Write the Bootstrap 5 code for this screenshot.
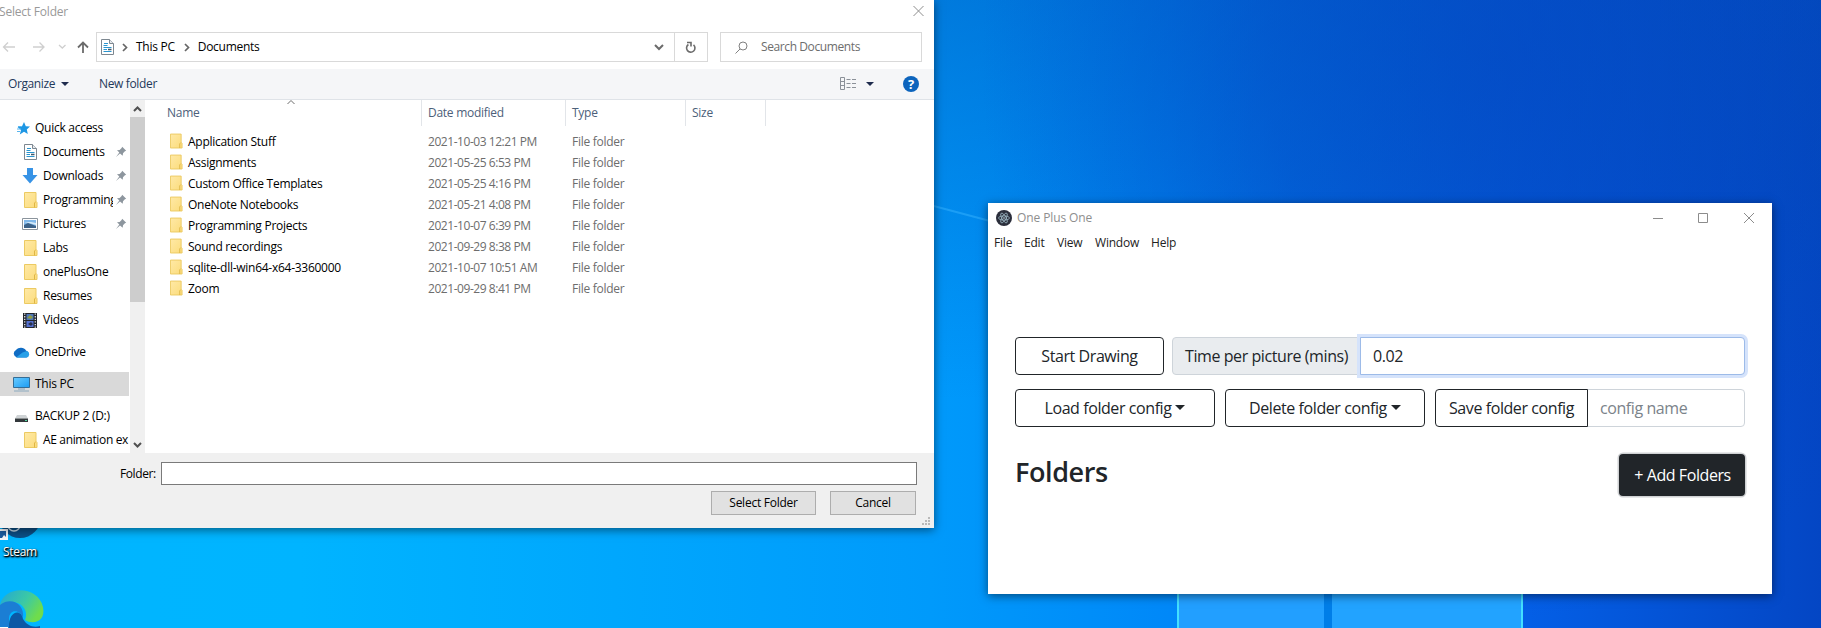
<!DOCTYPE html>
<html lang="en">
<head>
<meta charset="utf-8">
<title>Desktop</title>
<link href="https://cdn.jsdelivr.net/npm/bootstrap@5.3.0/dist/css/bootstrap.min.css" rel="stylesheet">
<style>
body{width:1821px;height:628px;overflow:hidden;font-family:"Open Sans","Noto Sans",sans-serif;color:#000}
.desk{width:1821px;height:628px;position:relative;overflow:hidden;
 background:
 radial-gradient(ellipse 520px 560px at 1500px 60px,rgba(4,68,190,.6),rgba(4,68,190,.45) 45%,rgba(4,68,190,0)),
 linear-gradient(180deg,rgba(0,80,180,.42),rgba(0,80,180,0) 400px),
 linear-gradient(90deg,#00b6ff 0,#00b4ff 300px,#009afb 930px,#0088f8 1170px,#045fe6 1530px,#0446c4 1821px)}
.scene{position:absolute;left:0;top:0}
.win{position:absolute;background:#fff;box-shadow:0 2px 9px rgba(0,0,0,.5)}
.dlg{left:0;top:0;width:934px;height:528px;font-size:12px;line-height:16px;letter-spacing:-.27px}
.ttl{height:32px;padding-top:4px;color:#999}
.ttl .nm{margin-left:-1px;letter-spacing:-.2px}
.abox{height:30px;border:1px solid #d9d9d9}
.tb{height:31px;margin-top:7px;background:#f5f6f8;border-bottom:1px solid #dfe3e8;color:#1e395b}
.caret{width:0;height:0;border:4px solid transparent;border-top:4px solid #1e2b4d;border-bottom:0}
.body1{height:353px}
.side{width:130px;padding-top:16px;overflow:hidden}
.it{height:24px;display:flex;align-items:center;white-space:nowrap;position:relative}
.it svg{flex:none}
.l1{padding-left:13px}.l1 span{margin-left:5px}
.l2{padding-left:22px}.l2 span{margin-left:5px}
.l2 .clip{width:70px;overflow:hidden}
.pin{position:absolute;left:115px;top:6px}
.sel{background:#d9d9d9;width:129px}
.sb{width:15px;background:#f0f0f0}
.thumb{height:185px;background:#cdcdcd}
.hd{height:26px;color:#4c607a}
.hd>div{border-right:1px solid #e2e5e9;padding-top:5px;padding-left:6px}
.c1{width:276px}.c2{width:144px}.c3{width:120px}.c4{width:80px}
.fr{height:21px;display:flex;align-items:center;white-space:nowrap;color:#6d6d6d}
.fr .nm{color:#000;margin-left:5px}
.dt{letter-spacing:-.45px}
.foot{height:75px;background:#f0f0f0}
.wb{height:24px;background:#e1e1e1;border:1px solid #adadad;border-radius:0;font-size:12px;padding:0;line-height:20px;color:#000;letter-spacing:-.25px}
.app{left:988px;top:203px;width:784px;height:391px}
.mn{font-size:12px;line-height:16px;letter-spacing:-.2px;color:#222;height:22px}
.app .btn,.app .form-control,.app .input-group-text{font-size:16px;letter-spacing:-.42px;border-radius:4px}
.app .form-control,.app .input-group-text{border-color:#ced4da}
.app .input-group-text{background:#e9ecef;color:#212529}
.app .form-control::placeholder{color:#7b838a}
.app .btn-outline-dark{background:#fff;color:#212529}
.app .dropdown-toggle::after{border-top:5px solid #212529;border-left:5px solid transparent;border-right:5px solid transparent;margin-left:4px;vertical-align:4px}
.app .input-group>:not(:last-child){border-top-right-radius:0;border-bottom-right-radius:0}
.app .input-group>:not(:first-child){border-top-left-radius:0;border-bottom-left-radius:0}
.lit{border-color:#9dbbe8!important;box-shadow:0 0 0 3px #d5e3fb!important}
.addb,.addb:hover{width:126px;height:42px;background:#212529;color:#fff;box-shadow:0 0 0 1.5px #cfd1d3;padding:0 0 1px 1px}
.hf{font-size:27px;font-weight:600;line-height:36px;color:#212529;letter-spacing:-.4px}
.steam{position:absolute;left:3px;top:544px;font-size:12px;line-height:16px;color:#fff;letter-spacing:-.3px;text-shadow:1px 1px 2px #000,0 1px 2px #000,1px 1px 1px #000}
</style>
<script src="https://cdn.jsdelivr.net/npm/bootstrap@5.3.0/dist/js/bootstrap.bundle.min.js"></script>
</head>
<body>
<svg width="0" height="0" class="position-absolute">
<defs>
<linearGradient id="fg" x1="0" y1="0" x2="1" y2="1"><stop offset="0" stop-color="#ffe9a6"/><stop offset="1" stop-color="#fbdc7c"/></linearGradient>
<linearGradient id="eg" x1="0" y1="0" x2="1" y2=".5"><stop offset="0" stop-color="#22a6d8"/><stop offset=".6" stop-color="#3cc9a4"/><stop offset="1" stop-color="#6fdc4c"/></linearGradient>
<linearGradient id="mg" x1="0" y1="0" x2="1" y2="1"><stop offset="0" stop-color="#69cbff"/><stop offset="1" stop-color="#1c9cf3"/></linearGradient>
<symbol id="fold" viewBox="0 0 14 17"><path d="M.5.5h11.500V9.500l1 1V15.500H.5z" fill="url(#fg)" stroke="#ecca62"/><path d="M10.500 15.500V11l1.500-1.500" fill="none" stroke="#dfb544"/></symbol>
<symbol id="doc" viewBox="0 0 13 16"><path d="M.5.5h8l4 4v11H.5z" fill="#fff" stroke="#7d8790"/><path d="M8.500.5v4h4" fill="#e6eaed" stroke="#7d8790"/><path d="M3 4.500h4M2.500 6.500h4M2.500 8.500h8M2.500 10.500h3.500M2.500 12.500h8" stroke="#2a95cf"/><path d="M7 10.500h3.500" stroke="#44586a" stroke-width="1.500"/></symbol>
<symbol id="pin" viewBox="0 0 12 12"><path d="M7.200.8 11.200 4.800 9.900 5.300 8 7.300 7.700 9.700 5 7.400 1 11l3.300-4.500L2 4.300l2.600-.4 2-2z" fill="#8d969e"/></symbol>
</defs></svg>

<div class="desk">
<svg class="scene" width="1821" height="628">
  <path d="M930 205 990 221" stroke="#37b3ff" stroke-width="2" opacity=".5"/>
  <path d="M1177 590H1324V628H1177z" fill="#229fff"/><path d="M1332 590H1522V628H1332z" fill="#22a3ff"/>
  <path d="M1324 590h8v38h-8z" fill="#007ee8"/>
  <path d="M1178 590v38M1522 590v38" stroke="#43e0ff" stroke-width="2"/>
  <circle cx="20" cy="517" r="21" fill="#0c4f87"/><circle cx="14" cy="525" r="6" fill="none" stroke="#c8dcec" stroke-width="1.500"/>
  <path d="M0 529h8v11H0z" fill="#f4f7fa"/><path d="M0 531h6v6L4 535 2 538H0z" fill="#1c5c9f"/>
  <path d="M0 605C4 585 38 585 43 607 46 622 33 625 25 620 29 611 22 602 12 602 6 602 3 604 0 608z" fill="url(#eg)"/>
  <path d="M0 605C12 596 25 605 23 618 20 609 9 609 9 619V628H0z" fill="#1b7ed4"/>
  <path d="M9 628C8 611 21 608 23 619 27 626 34 628 40 626V628z" fill="#0c58a5"/>
  <path d="M0 627h8v1H0z" fill="#fff"/>
</svg>
<div class="steam">Steam</div>

<section class="win dlg">
  <div class="ttl d-flex justify-content-between"><span class="nm">Select Folder</span>
    <svg width="12" height="12" style="margin:1px 9px 0 0"><path d="M.5 1l10 10M10.500 1l-10 10" stroke="#8c8c8c" fill="none"/></svg></div>
  <div class="d-flex">
    <svg width="96" height="30" fill="none"><g stroke="#cfcfcf" stroke-width="1.300"><path d="M15 15H3.500M8 10.500 3.500 15 8 19.500M33 15H44M39.500 10.500 44 15 39.500 19.500M59 13l3.300 3L65.500 13"/></g><path d="M83 21V11M78 15.500 83 10.500 88 15.500" stroke="#6b6b6b" stroke-width="1.800"/></svg>
    <div class="abox d-flex align-items-center" style="width:579px">
      <svg width="13" height="16" class="ms-1"><use href="#doc"/></svg>
      <svg width="22" height="12" fill="none"><path d="M9 3l3.500 3.500L9 10" stroke="#666" stroke-width="1.700"/></svg>
      <span>This PC</span>
      <svg width="23" height="12" fill="none"><path d="M10 3l3.500 3.500L10 10" stroke="#666" stroke-width="1.700"/></svg>
      <span>Documents</span>
      <svg width="10" height="8" class="ms-auto" style="margin-right:10px" fill="none"><path d="M1 2l4 4 4-4" stroke="#6b6b6b" stroke-width="2"/></svg>
    </div>
    <div class="abox border-start-0 d-flex align-items-center justify-content-center" style="width:33px">
      <svg width="12" height="13" fill="none"><path d="M8.500 3.800A4.200 4.200 0 1 1 3.400 3.500M2 1.500H6V5.500" stroke="#6b6b6b" stroke-width="1.600"/></svg>
    </div>
    <div class="abox d-flex align-items-center" style="width:202px;margin-left:12px;color:#6d6d6d;letter-spacing:-.4px">
      <svg width="13" height="13" style="margin:0 13px 0 14px" fill="none"><circle cx="8" cy="5" r="4" stroke="#808080"/><path d="M5 8 .5 12.500" stroke="#808080"/></svg>Search Documents
    </div>
  </div>
  <div class="tb d-flex align-items-center">
    <span style="margin-left:8px;letter-spacing:-.4px">Organize</span><i class="caret" style="margin-left:6px"></i>
    <span style="margin-left:30px;letter-spacing:-.35px">New folder</span>
    <svg class="ms-auto" width="17" height="14" fill="none" stroke="#8b9199"><path d="M.5.5h4v12h-4zM.5 4.500h4M.5 8.500h4"/><path d="M6.500 2.500h4M12 2.500h4M6.500 6.500h4M12 6.500h4M6.500 10.500h4M12 10.500h4"/></svg>
    <i class="caret" style="margin:0 29px 0 9px"></i>
    <svg width="16" height="16" style="margin-right:15px"><circle cx="8" cy="8" r="8" fill="#0c64bd"/><text x="8" y="12.500" font-size="13" font-weight="700" fill="#fff" text-anchor="middle" letter-spacing="0">?</text></svg>
  </div>
  <div class="body1 d-flex">
    <div class="side">
      <div class="it l1" style="padding-left:17px"><svg width="13" height="13"><path d="M7 0 8.800 4.200 13 4.600 9.800 7.600 10.800 12 7 9.800 2.800 12.500 4 8 .5 5 5 4.300z" fill="#1e97e4"/><path d="M0 7h4M0 9.500h3M1 4.500h3" stroke="#58b5ee"/></svg><span>Quick access</span></div>
      <div class="it l2"><svg width="16" height="16"><use href="#doc" x="2" width="13" height="16"/></svg><span>Documents</span><svg class="pin" width="12" height="12"><use href="#pin"/></svg></div>
      <div class="it l2"><svg width="16" height="16"><path d="M5 0h6v7h4.500L8 15.500.5 7H5z" fill="#3793e6"/></svg><span>Downloads</span><svg class="pin" width="12" height="12"><use href="#pin"/></svg></div>
      <div class="it l2"><svg width="16" height="17"><use href="#fold" x="2" width="14" height="17"/></svg><span class="clip">Programming</span><svg class="pin" width="12" height="12"><use href="#pin"/></svg></div>
      <div class="it l2"><svg width="16" height="12"><path d="M.5.5h15v11H.5z" fill="#fff" stroke="#8b949c"/><path d="M2 2h12v8H2z" fill="#7fb8ea"/><path d="M2 7 6 5l8 3v2H2z" fill="#3c6288"/><path d="M2 4h7l5 1v2L7 5z" fill="#d6eaf8"/></svg><span>Pictures</span><svg class="pin" width="12" height="12"><use href="#pin"/></svg></div>
      <div class="it l2"><svg width="16" height="17"><use href="#fold" x="2" width="14" height="17"/></svg><span>Labs</span></div>
      <div class="it l2"><svg width="16" height="17"><use href="#fold" x="2" width="14" height="17"/></svg><span>onePlusOne</span></div>
      <div class="it l2"><svg width="16" height="17"><use href="#fold" x="2" width="14" height="17"/></svg><span>Resumes</span></div>
      <div class="it l2"><svg width="16" height="15"><path d="M1 0h14v15H1z" fill="#23262c"/><path d="M4.500 1h7v6h-7z" fill="#4f77b8"/><path d="M4.500 8h7v6h-7z" fill="#5570d0"/><path d="M5 5l3-3 3 2-2 2z" fill="#8e9b43"/><path d="M6 11l3-2 2 2-2 2z" fill="#28304d"/><path d="M2.700.5V15M13.300.5V15" stroke="#dfe3e8" stroke-width="1.300" stroke-dasharray="1.300 1.300"/></svg><span>Videos</span></div>
      <div class="it l1 mt-2"><svg width="17" height="11"><path d="M4 10.500A4 4 0 0 1 3 3 6 5.500 0 0 1 13 3.500 3.800 3.800 0 0 1 13.500 10.500z" fill="#0f6cc4"/><path d="M3 10.500 9.500 5.500 14 4A3.400 3.400 0 0 1 13.500 10.500z" fill="#28a0e8"/></svg><span>OneDrive</span></div>
      <div class="it l1 mt-2 sel"><svg width="17" height="16"><path d="M.5 1.500h16v10H.5z" fill="url(#mg)" stroke="#356d96"/><path d="M5 13h7" stroke="#84a5be"/><path d="M1 15h15" stroke="#8caabf"/></svg><span>This PC</span></div>
      <div class="it l1 mt-2"><svg width="17" height="9" class="mt-1"><path d="M4 1h9l2 3.500H2z" fill="#cfd3d5"/><path d="M2 4.500h13V8H2z" fill="#33383b"/><path d="M12 6.500h2" stroke="#54d8a0"/></svg><span>BACKUP 2 (D:)</span></div>
      <div class="it l2"><svg width="16" height="17"><use href="#fold" x="2" width="14" height="17"/></svg><span style="letter-spacing:-.35px">AE animation ex</span></div>
    </div>
    <div class="sb d-flex flex-column">
      <svg width="15" height="17" fill="none"><path d="M4 11l3.500-3.500L11 11" stroke="#505050" stroke-width="2"/></svg>
      <div class="thumb"></div>
      <svg class="mt-auto" width="15" height="17" fill="none"><path d="M4 7l3.500 3.500L11 7" stroke="#505050" stroke-width="2"/></svg>
    </div>
    <div class="ms-auto position-relative" style="width:789px">
      <svg class="position-absolute" style="left:141px;top:-1px" width="10" height="7" fill="none"><path d="M1.500 5 5 1.500 8.500 5" stroke="#6d6d6d"/></svg>
      <div class="hd d-flex"><div style="width:277px;padding-left:22px">Name</div><div class="c2">Date modified</div><div class="c3">Type</div><div class="c4">Size</div></div>
      <div id="rows" style="padding-top:5px"></div>
    </div>
  </div>
  <div class="foot">
    <div class="d-flex align-items-center" style="padding:9px 0 0 120px"><span style="width:41px;letter-spacing:-.4px">Folder:</span><div style="width:756px;height:23px;border:1px solid #7a7a7a;background:#fff"></div></div>
    <div class="d-flex justify-content-end" style="padding:6px 18px 0 0;gap:14px"><button class="btn wb" style="width:105px">Select Folder</button><button class="btn wb" style="width:86px">Cancel</button></div>
  </div>
  <svg class="position-absolute" style="right:3px;bottom:2px" width="9" height="9" fill="#b9b9b9"><path d="M6 0h2v2H6zM3 3h2v2H3zM6 3h2v2H6zM0 6h2v2H0zM3 6h2v2H3zM6 6h2v2H6z"/></svg>
</section>

<section class="win app">
  <div class="d-flex align-items-center" style="height:30px;padding:0 17px 0 8px;font-size:12px;letter-spacing:-.1px;color:#8e8e8e">
    <svg width="16" height="16" fill="none"><circle cx="8" cy="8" r="8" fill="#2b2e3b"/><g stroke="#a9c6d2" stroke-width=".7"><ellipse cx="8" cy="8" rx="5.500" ry="2.100"/><ellipse cx="8" cy="8" rx="5.500" ry="2.100" transform="rotate(60 8 8)"/><ellipse cx="8" cy="8" rx="5.500" ry="2.100" transform="rotate(120 8 8)"/></g><circle cx="8" cy="8" r=".8" fill="#cfe6ee"/></svg>
    <span style="margin-left:5px">One Plus One</span>
    <svg class="ms-auto" width="102" height="12" fill="none" stroke="#8c8c8c"><path d="M0 6.500h10M45.500 1.500h9v9h-9zM91 1l10 10M101 1l-10 10"/></svg>
  </div>
  <div class="d-flex mn" style="padding:2px 0 0 6px"><span style="width:30px">File</span><span style="width:33px">Edit</span><span style="width:38px">View</span><span style="width:56px">Window</span><span>Help</span></div>
  <main style="padding:82px 27px 0 27px">
    <div class="d-flex" style="gap:8px">
      <button class="btn btn-outline-dark" style="width:149px">Start Drawing</button>
      <div class="input-group flex-nowrap" style="width:573px"><span class="input-group-text" style="width:189px">Time per picture (mins)</span><input class="form-control lit" value="0.02"></div>
    </div>
    <div class="d-flex" style="gap:10px;margin-top:14px">
      <button class="btn btn-outline-dark dropdown-toggle" style="width:200px">Load folder config</button>
      <button class="btn btn-outline-dark dropdown-toggle" style="width:200px">Delete folder config</button>
      <div class="input-group flex-nowrap" style="width:310px"><button class="btn btn-outline-dark px-0" style="width:153px">Save folder config</button><input class="form-control" placeholder="config name"></div>
    </div>
    <div class="d-flex justify-content-between" style="margin-top:27px">
      <h3 class="mb-0 hf">Folders</h3><button class="btn addb">+ Add Folders</button>
    </div>
  </main>
</section>
</div>
<script>
const files=[["Application Stuff","2021-10-03 12:21 PM"],["Assignments","2021-05-25 6:53 PM"],["Custom Office Templates","2021-05-25 4:16 PM"],["OneNote Notebooks","2021-05-21 4:08 PM"],["Programming Projects","2021-10-07 6:39 PM"],["Sound recordings","2021-09-29 8:38 PM"],["sqlite-dll-win64-x64-3360000","2021-10-07 10:51 AM"],["Zoom","2021-09-29 8:41 PM"]];
document.getElementById("rows").innerHTML=files.map(f=>`<div class="fr"><div class="d-flex align-items-center" style="width:283px;padding-left:25px"><svg width="13" height="17"><use href="#fold" width="13" height="17"/></svg><span class="nm">${f[0]}</span></div><div class="c2 dt">${f[1]}</div><div>File folder</div></div>`).join("");
</script>
</body>
</html>
